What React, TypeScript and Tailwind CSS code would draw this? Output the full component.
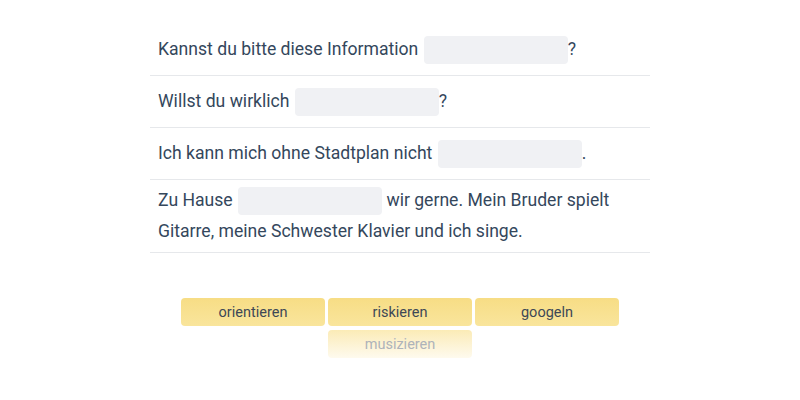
import React from 'react';

type Part = string | null;

const sentences: Part[][] = [
  ['Kannst du bitte diese Information ', null, '?'],
  ['Willst du wirklich ', null, '?'],
  ['Ich kann mich ohne Stadtplan nicht ', null, '.'],
  ['Zu Hause ', null, ' wir gerne. Mein Bruder spielt Gitarre, meine Schwester Klavier und ich singe.'],
];

const words = ['orientieren', 'riskieren', 'googeln'];

// negative margins keep the blank from stretching the line box
const Blank = () => (
  <span className="my-[-4px] ml-[1px] inline-block h-[28px] w-[144px] rounded-[4px] bg-[#f0f1f4] align-[-5px]" />
);

const App = () => {
  return (
    <div className="min-h-screen bg-white pt-[24px] font-['Roboto',sans-serif] text-[#34475c]">
      <div className="mx-auto w-[500px]">
        {sentences.map((parts, i) => (
          <div key={i} className="flex min-h-[52px] items-center border-b border-[#e6e8eb] px-2 py-[5px]">
            <p className="text-[17.6px] leading-[31px]">
              {parts.map((p, j) => (p === null ? <Blank key={j} /> : <span key={j}>{p}</span>))}
            </p>
          </div>
        ))}
      </div>

      <div className="mx-auto mt-[45px] flex w-[440px] flex-wrap justify-center gap-x-[3px] gap-y-[4px]">
        {words.map((w) => (
          <button
            key={w}
            className="h-[28px] w-[144px] rounded-[4px] bg-gradient-to-b from-[#f7dd85] to-[#f9e59c] pt-[1px] text-[14.5px] text-[#3d4856]"
          >
            {w}
          </button>
        ))}
        <button className="h-[28px] w-[144px] rounded-[4px] bg-gradient-to-b from-[#fbebb6] to-[#fefaee] pt-[1px] text-[14.5px] text-[#aeb3ba]">
          musizieren
        </button>
      </div>
    </div>
  );
};

export default App;
